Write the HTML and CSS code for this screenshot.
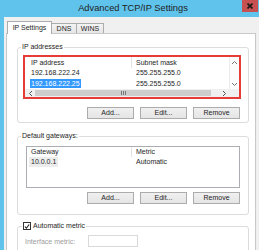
FILE: index.html
```html
<!DOCTYPE html>
<html>
<head>
    <title>Advanced TCP/IP Settings</title>
    <meta name="viewport" content="width=device-width, initial-scale=1">
    <link rel="stylesheet" href="styles.css">
</head>
<body>
    <div class="window">
        <div class="titlebar">
            <div class="title">Advanced TCP/IP Settings</div>
            <div class="close">
                <svg width="6" height="6" viewBox="0 0 6 6"><path d="M0.5 0.5 L5.5 5.5 M5.5 0.5 L0.5 5.5" stroke="#1a1a1a" stroke-width="1.6"/></svg>
            </div>
        </div>
        <div class="client">
            <div class="tabs">
                <div class="tab active">IP Settings</div>
                <div class="tab tab-dns">DNS</div>
                <div class="tab tab-wins">WINS</div>
            </div>
            <div class="panel">
                <div class="group group-ip">
                    <div class="group-title">IP addresses</div>
                    <div class="highlight">
                        <div class="listview">
                            <div class="lv-main">
                                <div class="lv-head"><span class="col1">IP address</span><span class="col2">Subnet mask</span></div>
                                <div class="lv-row"><span class="col1">192.168.222.24</span><span class="col2">255.255.255.0</span></div>
                                <div class="lv-row row-tall"><span class="col1"><span class="sel">192.168.222.25</span></span><span class="col2">255.255.255.0</span></div>
                            </div>
                            <div class="vscroll">
                                <svg width="5" height="3" viewBox="0 0 5 3"><path d="M0 3 L2.5 0.5 L5 3" fill="none" stroke="#777" stroke-width="1"/></svg>
                                <svg width="5" height="3" viewBox="0 0 5 3"><path d="M0 0 L2.5 2.5 L5 0" fill="none" stroke="#777" stroke-width="1"/></svg>
                            </div>
                            <div class="hscroll">
                                <div class="sb-btn">
                                    <svg width="3" height="5" viewBox="0 0 3 5"><path d="M3 0 L0.5 2.5 L3 5" fill="none" stroke="#555" stroke-width="1"/></svg>
                                </div>
                                <div class="thumb"><span class="grip"></span></div>
                                <div class="track"></div>
                                <div class="sb-btn">
                                    <svg width="3" height="5" viewBox="0 0 3 5"><path d="M0 0 L2.5 2.5 L0 5" fill="none" stroke="#555" stroke-width="1"/></svg>
                                </div>
                            </div>
                            <div class="corner"></div>
                        </div>
                    </div>
                    <div class="buttons">
                        <div class="btn">Add...</div>
                        <div class="btn">Edit...</div>
                        <div class="btn">Remove</div>
                    </div>
                </div>

                <div class="group group-gw">
                    <div class="group-title">Default gateways:</div>
                    <div class="listbox">
                        <div class="lb-head"><span class="col1">Gateway</span><span class="col2">Metric</span></div>
                        <div class="lb-row"><span class="col1"><span class="sel-gray">10.0.0.1</span></span><span class="col2">Automatic</span></div>
                    </div>
                    <div class="buttons">
                        <div class="btn">Add...</div>
                        <div class="btn">Edit...</div>
                        <div class="btn">Remove</div>
                    </div>
                </div>

                <div class="group group-metric">
                    <div class="group-title check-title">
                        <span class="checkbox">
                            <svg width="7" height="7" viewBox="0 0 7 7"><path d="M1 3.5 L2.8 5.5 L6 1.2" fill="none" stroke="#222" stroke-width="1.3"/></svg>
                        </span>
                        <span>Automatic metric</span>
                    </div>
                    <div class="metric-row">
                        <span class="metric-label">Interface metric:</span>
                        <span class="metric-input"></span>
                    </div>
                </div>
            </div>
        </div>
    </div>
</body>
</html>
```
FILE: styles.css
```css
body {
    margin: 0;
    font-family: "Liberation Sans", Arial, sans-serif;
    font-size: 7px;
    color: #1e1e1e;
}
.window {
    width: 259px;
    height: 250px;
    overflow: hidden;
    background-color: #5fc3ec;
}
.titlebar {
    display: flex;
    height: 17px;
}
.title {
    flex: 1;
    padding-left: 24px;
    text-align: center;
    font-size: 9.3px;
    line-height: 16px;
    color: #222;
}
.close {
    width: 16px;
    height: 12px;
    margin-right: 1px;
    background-color: #c75050;
    display: flex;
    align-items: center;
    justify-content: center;
}
.close svg {
    display: block;
}
.client {
    margin-left: 4px;
    height: 233px;
    box-sizing: border-box;
    padding-top: 4px;
    background-color: #f0f0f0;
}
.tabs {
    display: flex;
    align-items: flex-end;
    height: 13px;
    padding-left: 3px;
    position: relative;
    z-index: 1;
}
.tab {
    box-sizing: border-box;
    height: 10px;
    margin-bottom: 1px;
    margin-left: -1px;
    border: 1px solid #acacac;
    border-bottom: none;
    background: linear-gradient(#f4f4f4, #e6e6e6);
    text-align: center;
    line-height: 9px;
}
.tab.active {
    height: 13px;
    width: 45px;
    margin-bottom: 0;
    margin-left: 0;
    background: #fff;
    line-height: 12px;
}
.tab-dns {
    width: 26px;
}
.tab-wins {
    width: 28px;
}
.panel {
    margin-top: -1px;
    margin-left: 2px;
    width: 250px;
    height: 230px;
    box-sizing: border-box;
    border: 1px solid #c9c9c9;
    background-color: #fff;
    overflow: hidden;
}
.group {
    box-sizing: border-box;
    width: 232px;
    margin-left: 10px;
    border: 1px solid #dcdcdc;
    border-radius: 3px;
}
.group-ip {
    margin-top: 13px;
    padding-bottom: 3px;
}
.group-gw {
    margin-top: 13px;
    padding-bottom: 10px;
}
.group-metric {
    margin-top: 11px;
    height: 40px;
}
.group-title {
    width: fit-content;
    margin: -5px 0 0 3px;
    padding: 0 1px;
    background-color: #fff;
    line-height: 8px;
}
.highlight {
    box-sizing: border-box;
    width: 218px;
    height: 44px;
    margin: 4px 0 0 5px;
    border: 2px solid #e63b36;
}
.listview {
    display: grid;
    grid-template-columns: 1fr 10px;
    grid-template-rows: 32px 8px;
    height: 40px;
}
.lv-head, .lv-row, .lb-head, .lb-row {
    display: flex;
    height: 10px;
    line-height: 10px;
}
.lv-head {
    height: 11px;
    line-height: 11px;
}
.row-tall {
    height: 11px;
    line-height: 11px;
}
.lv-main .col1 {
    width: 107px;
    padding-left: 6px;
    box-sizing: border-box;
}
.lb-head .col1, .lb-row .col1 {
    width: 105px;
    padding-left: 4px;
    box-sizing: border-box;
}
.lv-head .col1, .lb-head .col1 {
    border-right: 1px solid #e3e3e3;
}
.col2 {
    padding-left: 4px;
}
.sel {
    display: inline-block;
    margin-left: -1px;
    padding: 0 1px;
    line-height: 9px;
    background-color: #3399ff;
    color: #fff;
}
.sel-gray {
    display: inline-block;
    margin-left: -2px;
    padding: 0 2px;
    line-height: 10px;
    background-color: #ececec;
}
.vscroll {
    display: flex;
    flex-direction: column;
    justify-content: space-between;
    align-items: center;
    padding: 4px 0 3px;
    box-sizing: border-box;
    border-left: 1px solid #ececec;
    background-color: #fcfcfc;
}
.vscroll svg, .sb-btn svg {
    display: block;
}
.hscroll {
    display: flex;
    background-color: #f0f0f0;
}
.sb-btn {
    width: 10px;
    display: flex;
    align-items: center;
    justify-content: center;
}
.thumb {
    width: 176px;
    margin: 1px 0;
    background-color: #cdcdcd;
    display: flex;
    align-items: center;
    justify-content: center;
}
.grip {
    width: 1px;
    height: 4px;
    background-color: #777;
    box-shadow: 2px 0 #777, 4px 0 #777;
    margin-left: -4px;
}
.track {
    flex: 1;
}
.corner {
    background-color: #f0f0f0;
}
.buttons {
    display: flex;
    justify-content: flex-end;
    gap: 6px;
    padding-right: 8px;
    margin-top: 8px;
}
.group-gw .buttons {
    margin-top: 4px;
}
.btn {
    box-sizing: border-box;
    width: 47px;
    height: 12px;
    border: 1px solid #acacac;
    background: linear-gradient(#f0f0f0, #e5e5e5);
    text-align: center;
    line-height: 10px;
}
.listbox {
    box-sizing: border-box;
    width: 214px;
    height: 42px;
    margin: 6px 0 0 8px;
    border: 1px solid #abadb3;
}
.check-title {
    display: flex;
    align-items: center;
    gap: 2px;
    margin-left: 4px;
}
.checkbox {
    box-sizing: border-box;
    width: 8px;
    height: 8px;
    border: 1px solid #333;
    background-color: #fff;
    display: flex;
    align-items: center;
    justify-content: center;
}
.checkbox svg {
    display: block;
}
.metric-row {
    display: flex;
    align-items: center;
    margin: 5px 0 0 7px;
}
.metric-label {
    width: 63px;
    color: #9c9c9c;
}
.metric-input {
    box-sizing: border-box;
    width: 50px;
    height: 12px;
    border: 1px solid #d9d9d9;
    background-color: #fff;
}
```
